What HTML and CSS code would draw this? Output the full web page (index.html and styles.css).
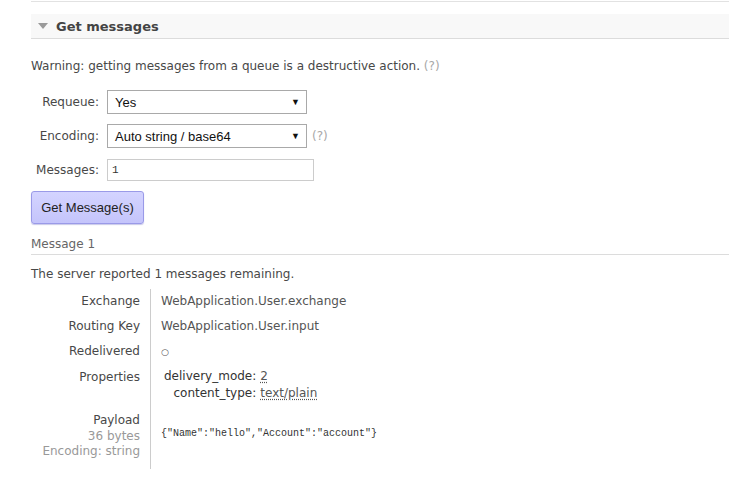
FILE: index.html
```html
<!DOCTYPE html>
<html>
<head>
<meta charset="utf-8">
<link rel="stylesheet" href="styles.css">
</head>
<body>
<div class="page">
  <div class="prev-section"></div>
  <div class="section">
    <h2 class="section-title"><span class="tri"></span>Get messages</h2>
    <p class="warning">Warning: getting messages from a queue is a destructive action. <span class="help">(?)</span></p>
    <form class="form">
      <div class="form-row">
        <label class="form-label">Requeue:</label>
        <div class="select"><span>Yes</span><span class="arrow">▼</span></div>
      </div>
      <div class="form-row">
        <label class="form-label">Encoding:</label>
        <div class="select"><span>Auto string / base64</span><span class="arrow">▼</span></div>
        <span class="help">(?)</span>
      </div>
      <div class="form-row row-input">
        <label class="form-label">Messages:</label>
        <div class="input">1</div>
      </div>
      <button type="button" class="btn">Get Message(s)</button>
    </form>
    <h3 class="msg-title">Message 1</h3>
    <p class="remaining">The server reported 1 messages remaining.</p>
    <table class="facts">
      <tr><th>Exchange</th><td>WebApplication.User.exchange</td></tr>
      <tr><th>Routing Key</th><td>WebApplication.User.input</td></tr>
      <tr><th>Redelivered</th><td><span class="circle">○</span></td></tr>
      <tr><th class="props-th">Properties</th><td class="props-td">
        <table class="props">
          <tr><th>delivery_mode:</th><td><abbr>2</abbr></td></tr>
          <tr><th>content_type:</th><td><abbr>text/plain</abbr></td></tr>
        </table>
      </td></tr>
      <tr class="payload-row"><th>Payload<br><span class="sub">36 bytes</span><br><span class="sub">Encoding: string</span></th><td><pre class="payload">{"Name":"hello","Account":"account"}</pre></td></tr>
    </table>
  </div>
</div>
</body>
</html>
```
FILE: styles.css
```css
html, body {
  margin: 0;
  padding: 0;
  background: #fff;
}
body {
  font-family: "DejaVu Sans", Verdana, sans-serif;
  font-size: 12px;
  color: #484848;
}
.page {
  padding-left: 31px;
}
.prev-section {
  height: 1px;
  margin-top: 1px;
  background: #e2e2e2;
}
.section-title {
  margin: 12px 0 0;
  height: 25px;
  box-sizing: border-box;
  border-bottom: 1px solid #dcdcdc;
  background: #f8f8f8;
  font-size: 13px;
  font-weight: bold;
  color: #444;
  display: flex;
  align-items: center;
  padding-left: 7px;
}
.tri {
  width: 0;
  height: 0;
  border-left: 5px solid transparent;
  border-right: 5px solid transparent;
  border-top: 6px solid #9a9a9a;
  margin-right: 8px;
}
.warning {
  margin: 20px 0 0;
  line-height: 15px;
}
.help {
  color: #a8a8a8;
}
.form {
  margin-top: 16px;
  display: flex;
  flex-direction: column;
  align-items: flex-start;
}
.form-row {
  display: flex;
  align-items: center;
  margin-bottom: 10px;
}
.row-input {
  margin-top: 1px;
}
.form-label {
  width: 68px;
  text-align: right;
  margin-right: 8px;
}
.select {
  width: 200px;
  height: 24px;
  box-sizing: border-box;
  border: 1px solid #a9a9a9;
  display: flex;
  align-items: center;
  justify-content: space-between;
  padding: 0 6px 0 7px;
  font-family: "Liberation Sans", Arial, sans-serif;
  font-size: 13px;
  color: #111;
  background: #fff;
}
.arrow {
  font-size: 9px;
  color: #111;
}
.select + .help {
  margin-left: 5px;
}
.input {
  width: 207px;
  height: 22px;
  box-sizing: border-box;
  border: 1px solid #ccc;
  padding: 0 4px;
  display: flex;
  align-items: center;
  font-family: "Liberation Mono", monospace;
  font-size: 11px;
  color: #333;
}
.btn {
  margin-top: 0;
  width: 113px;
  height: 33px;
  border: 1px solid #9a9ae8;
  border-radius: 3px;
  background: linear-gradient(#d4d4ff, #c4c4fb);
  font-family: "Liberation Sans", Arial, sans-serif;
  font-size: 13px;
  color: #222;
  padding: 0;
  box-shadow: 0 1px 1px rgba(120, 120, 200, 0.4);
}
.msg-title {
  margin: 13px 0 0;
  font-size: 12px;
  font-weight: normal;
  color: #666;
  line-height: 15px;
  padding-bottom: 2px;
  border-bottom: 1px solid #dcdcdc;
}
.remaining {
  margin: 12px 0 0;
  line-height: 15px;
}
.facts {
  border-collapse: collapse;
  margin-top: 7px;
}
.facts > tbody > tr > th {
  width: 109px;
  text-align: right;
  font-weight: normal;
  padding: 5px 10px 5px 0;
  line-height: 15px;
  vertical-align: top;
  color: #484848;
}
.facts > tbody > tr > td {
  border-left: 1px solid #ccc;
  padding: 5px 10px 5px 10px;
  line-height: 15px;
  color: #555;
  vertical-align: top;
}
.circle {
  font-size: 9px;
}
.facts > tbody > tr > td.props-td {
  padding-top: 3px;
}
.props {
  border-collapse: collapse;
  margin-left: 3px;
}
.props th {
  text-align: right;
  font-weight: normal;
  padding: 0 4px 0 0;
  line-height: 17px;
  color: #333;
}
.props td {
  padding: 0;
  line-height: 17px;
  color: #555;
}
abbr {
  text-decoration: underline dotted;
  text-underline-offset: 2px;
}
.facts > tbody > tr.payload-row > th {
  padding-top: 6px;
  padding-bottom: 9px;
  line-height: 15.5px;
}
.sub {
  color: #999;
}
.facts > tbody > tr.payload-row > td {
  padding-top: 21px;
}
.payload {
  margin: 0;
  font-family: "Liberation Mono", monospace;
  font-size: 10px;
  line-height: 12px;
  color: #333;
}
```
